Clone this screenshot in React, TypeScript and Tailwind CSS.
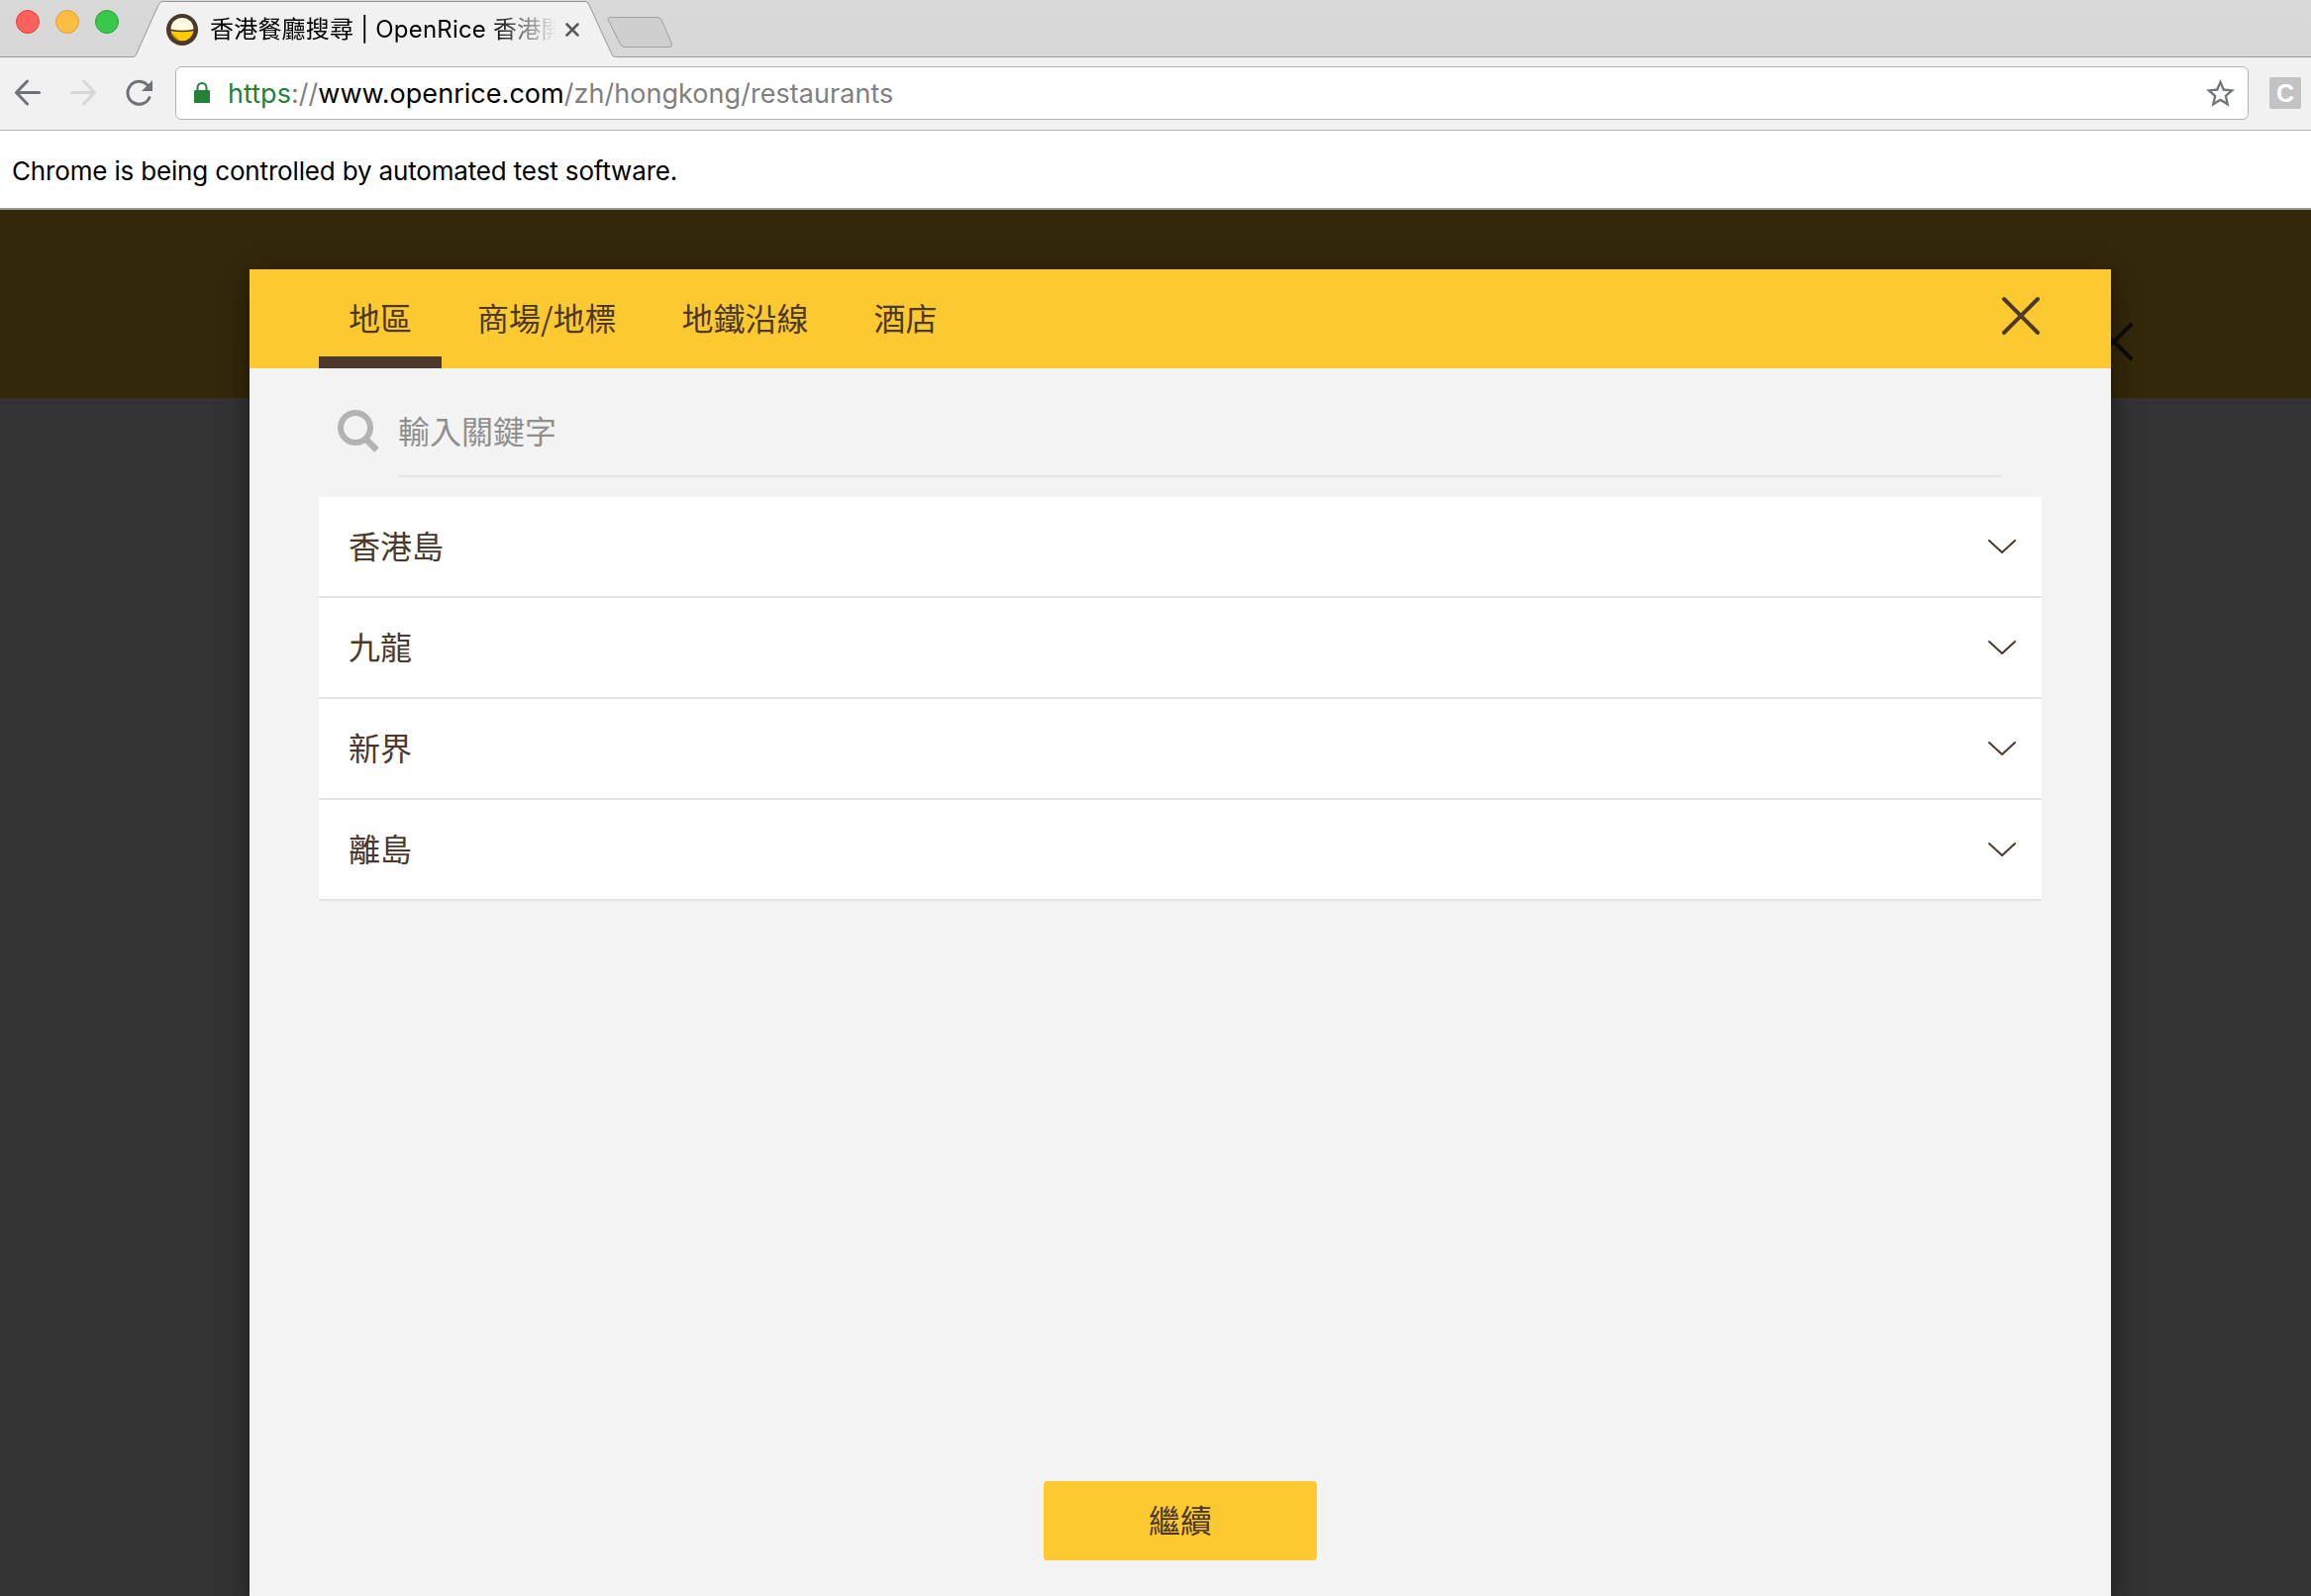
import React from "react";

const regions = ["香港島", "九龍", "新界", "離島"];
const tabs = ["地區", "商場/地標", "地鐵沿線", "酒店"];

function Cross({ className }: { className?: string }) {
  return (
    <svg viewBox="0 0 40 40" className={className} fill="none" stroke="currentColor" strokeWidth="4" strokeLinecap="round">
      <path d="M3 3L37 37M37 3L3 37" />
    </svg>
  );
}

function TabStrip() {
  return (
    <div className="relative flex h-[58px] shrink-0 bg-gradient-to-b from-[#dad9da] to-[#d8d7d8]">
      <svg className="absolute left-0 top-0" width="2334" height="58" fill="none">
        <path d="M0 57.5H134Q136.500 57.500 137.500 55L160 5Q161.500 1.500 164 1.500H591Q593.500 1.500 595 5L618 55Q619 57.500 621.500 57.500H2334V58H0Z" fill="#f1f1f1" />
        <path d="M0 57.500H134Q136.500 57.500 137.500 55L160 5Q161.500 1.500 164 1.500H591Q593.500 1.500 595 5L618 55Q619 57.500 621.500 57.500H2334" stroke="#979797" />
        <path d="M617 17.500H664Q666.500 17.500 668 20L678 43Q679.500 47.500 676 47.500H631Q628 47.500 626.500 45L614.500 20.500Q613.500 17.500 617 17.500Z" fill="#cfcfcf" stroke="#a0a0a0" />
      </svg>
      <div className="relative flex h-11 w-[168px] items-center gap-4 pl-4">
        <span className="size-6 rounded-full border border-[#e0443e] bg-[#fc615c]" />
        <span className="size-6 rounded-full border border-[#dea034] bg-[#fdbd41]" />
        <span className="size-6 rounded-full border border-[#1fa833] bg-[#3ac74b]" />
      </div>
      <div className="relative flex h-[60px] w-[420px] items-center">
        <svg width="32" height="32" viewBox="0 0 32 32">
          <circle cx="16" cy="16" r="16" fill="#4c392c" />
          <path d="M4.500 15.500A11.500 11.500 0 0 1 27.500 15.500Q16 18 4.500 15.500Z" fill="#fffbe0" />
          <path d="M4.500 17.200Q16 19.500 27.500 17.200A11.600 11.600 0 0 1 4.500 17.200Z" fill="#fc0" />
          <path d="M5.500 19L14 27.500A11 11 0 0 1 5.500 19Z" fill="#a77a10" opacity=".7" />
        </svg>
        <div className="ml-3 w-[352px] whitespace-nowrap font-[Inter,'Noto_Sans_CJK_TC',sans-serif] text-[24px] leading-9 tracking-[0.2px] text-black [mask-image:linear-gradient(to_right,black_285px,transparent_350px)]">
          香港餐廳搜尋 | OpenRice 香港開
        </div>
        <svg width="16" height="16" viewBox="0 0 16 16" className="ml-1.5" stroke="#5a5a5a" strokeWidth="2.600" strokeLinecap="round">
          <path d="M2.500 2.500L13.500 13.500M13.500 2.500L2.500 13.500" />
        </svg>
      </div>
    </div>
  );
}

function Toolbar() {
  return (
    <div className="flex h-[74px] shrink-0 items-center border-b border-[#b4b4b4] bg-[#f1f1f1] pb-px pl-[14px]">
      <svg width="28" height="28" viewBox="0 0 28 28" fill="none" stroke="#6e7277" strokeWidth="3" strokeLinecap="round" strokeLinejoin="round">
        <path d="M25.500 13.500H3M13.500 2L2.500 13.500L13.500 25" />
      </svg>
      <svg className="ml-7" width="28" height="28" viewBox="0 0 28 28" fill="none" stroke="#d5d7d9" strokeWidth="3" strokeLinecap="round" strokeLinejoin="round">
        <path d="M2.500 13.500H25M14.500 2L25.500 13.500L14.500 25" />
      </svg>
      <svg className="ml-7" width="30" height="28" viewBox="0 0 30 28">
        <path d="M25 18.500A11.500 11.500 0 1 1 22.500 5.500" fill="none" stroke="#6e7277" strokeWidth="3" strokeLinecap="round" />
        <path d="M28 1V12H17Z" fill="#6e7277" />
      </svg>
      <div className="ml-[21px] flex h-[54px] w-[2094px] items-center rounded-md border border-[#b5b5b5] bg-white pl-[17px] pr-[10px]">
        <svg width="18" height="24" viewBox="0 0 18 24">
          <path d="M4.500 10V6.500a4.500 4.500 0 0 1 9 0V10" fill="none" stroke="#25803a" strokeWidth="2" />
          <rect x="1" y="9" width="16" height="13" rx="1" fill="#25803a" />
        </svg>
        <div className="ml-[17px] flex-1 whitespace-nowrap pt-px font-[Inter,sans-serif] text-[27px] leading-9 tracking-[0.04px] text-[#808080]">
          <span className="text-[#25803a]">https</span>://<span className="text-black">www.openrice.com</span>/zh/hongkong/restaurants
        </div>
        <svg width="35" height="35" viewBox="0 0 24 24" fill="#72767b">
          <path d="M22 9.240l-7.190-.62L12 2 9.190 8.630 2 9.240l5.460 4.730L5.820 21 12 17.270 18.180 21l-1.630-7.030L22 9.240zM12 15.400l-3.760 2.270 1-4.280-3.320-2.880 4.380-.38L12 6.100l1.710 4.040 4.380.38-3.320 2.880 1 4.280L12 15.400z" />
        </svg>
      </div>
      <div className="ml-[21px] flex size-8 items-center justify-center rounded-[2px] bg-[#c3c3c3] font-['Liberation_Sans',sans-serif] text-[25px] font-bold leading-8 text-white">C</div>
    </div>
  );
}

function Modal() {
  return (
    <div className="relative ml-[252px] flex h-[1340px] w-[1880px] flex-col bg-[#f3f3f3] text-[32px] text-[#4c392c] shadow-[0_8px_24px_rgba(0,0,0,0.5)]">
      <div className="flex h-[100px] items-stretch justify-between bg-[#fdc930] pl-[70px] pr-[71px]">
        <div className="flex gap-[6px]">
          {tabs.map((tab, i) => (
            <div key={tab} className={i === 0 ? "flex items-center border-b-[12px] border-[#4c392c] px-[30px] pt-2" : "flex items-center px-[30px] pb-1"}>
              {tab}
            </div>
          ))}
        </div>
        <Cross className="mt-[27px] size-10" />
      </div>
      <div className="flex h-[110px] pl-[86px] pr-[110px]">
        <svg className="mt-[39px]" width="48" height="50" viewBox="0 0 48 50" fill="none" stroke="#b3b3b3">
          <circle cx="21" cy="21" r="15" strokeWidth="6" />
          <path d="M31 32L42.500 43.500" strokeWidth="6.500" />
        </svg>
        <div className="ml-4 flex flex-1 items-center border-b-2 border-[#e4e4e4] pt-4 text-[#8f8f8f]">輸入關鍵字</div>
      </div>
      <div className="mx-[70px] mt-5 flex flex-col">
        {regions.map((r) => (
          <div key={r} className="flex h-[102px] items-center justify-between border-b-2 border-[#e4e4e4] bg-white pl-[30px] pr-[25px]">
            <span className="pb-1">{r}</span>
            <svg width="30" height="16" viewBox="0 0 30 16" fill="none" stroke="currentColor" strokeWidth="2" strokeLinecap="round" strokeLinejoin="round">
              <path d="M2 2L15 14L28 2" />
            </svg>
          </div>
        ))}
      </div>
      <button className="mx-auto mt-auto mb-9 h-20 w-[276px] rounded bg-[#fdc930] pb-1">繼續</button>
    </div>
  );
}

export default function App() {
  return (
    <div className="flex h-[1612px] w-[2334px] flex-col overflow-hidden font-['Noto_Sans_CJK_TC',sans-serif]">
      <TabStrip />
      <Toolbar />
      <div className="flex h-20 shrink-0 items-center border-b-2 border-[#999] bg-white pl-3 pt-1 font-[Inter,sans-serif] text-[26px] leading-9 tracking-[-0.165px] text-black">
        <span>Chrome is being controlled by automated test software.</span>
      </div>
      <div className="relative h-[1400px] shrink-0 bg-[#333] pt-[60px]">
        <div className="absolute inset-x-0 top-0 h-[190px] bg-[#33280a]">
          <Cross className="absolute left-[2115px] top-[113px] size-10 text-[#0f0b09]" />
        </div>
        <Modal />
      </div>
    </div>
  );
}
